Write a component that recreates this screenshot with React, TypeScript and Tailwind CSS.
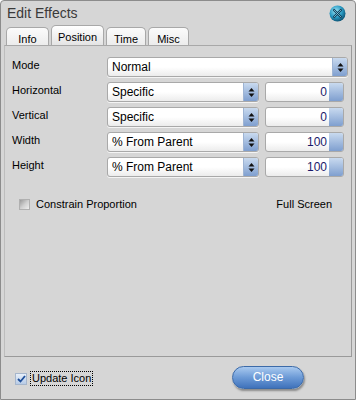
const font = { fontFamily: '"Liberation Sans", Arial, sans-serif' };

function Arrows() {
  return (
    <svg width="7" height="11" viewBox="0 0 7 11">
      <path d="M3.5 1 L6.5 4.5 L0.5 4.5 Z" fill="#111" />
      <path d="M3.5 10 L6.5 6.5 L0.5 6.5 Z" fill="#111" />
    </svg>
  );
}

function Select({ value, width }: { value: string; width: string }) {
  return (
    <div
      className={`${width} h-[20px] flex items-stretch rounded-[3px] border border-[#a9a9a9] bg-gradient-to-b from-white via-white to-[#ececec] shadow-[0_1px_0_#f4f4f4] overflow-hidden`}
    >
      <div className="flex-1 flex items-center pl-[4px] text-[12px] text-black">{value}</div>
      <div className="w-[15px] flex items-center justify-center bg-gradient-to-b from-[#c9daef] to-[#7f9fcf] border-l border-[#9eb4d4]">
        <Arrows />
      </div>
    </div>
  );
}

function NumberBox({ value }: { value: string }) {
  return (
    <div className="w-[79px] h-[20px] flex items-stretch rounded-[3px] border border-[#a9a9a9] bg-gradient-to-b from-white via-white to-[#ececec] overflow-hidden">
      <div className="flex-1 flex items-center justify-end pr-[2px] text-[12px] text-[#1a1a6a]">{value}</div>
      <div className="w-[14px] bg-gradient-to-b from-[#c9daef] to-[#7f9fcf]" />
    </div>
  );
}

function Row({ label, children }: { label: string; children: React.ReactNode }) {
  return (
    <div className="flex items-start">
      <div className="w-[95px] text-[11px] leading-[14px] pt-[1px] text-black">{label}</div>
      <div className="flex gap-[6px]">{children}</div>
    </div>
  );
}

function Tab({ label, active, width }: { label: string; active?: boolean; width: string }) {
  return (
    <div
      className={`${width} flex justify-center rounded-t-[5px] border border-b-0 border-[#a8a8a8] text-[11px] text-black ${
        active ? 'h-[20px] pt-[3px] bg-gradient-to-b from-white to-[#e4e4e4]' : 'h-[18px] pt-[3px] bg-gradient-to-b from-[#fbfbfb] to-[#ececec]'
      }`}
    >
      {label}
    </div>
  );
}

export default function App() {
  return (
    <div
      style={font}
      className="w-[356px] h-[400px] bg-[#d6d6d6] border border-[#8c8c8c] rounded-t-[4px] flex flex-col overflow-hidden"
    >
      <div className="h-[23px] flex items-center justify-between pl-[6px] pr-[9px] pt-[1px]">
        <span className="text-[14px] text-[#3a3a3a]">Edit Effects</span>
        <svg width="17" height="17" viewBox="0 0 17 17">
          <defs>
            <radialGradient id="cg" cx="40%" cy="35%" r="65%">
              <stop offset="0" stopColor="#9be3f5" />
              <stop offset="0.6" stopColor="#2a9bc4" />
              <stop offset="1" stopColor="#0d5678" />
            </radialGradient>
          </defs>
          <circle cx="8.5" cy="8.5" r="8" fill="url(#cg)" />
          <path d="M5 5 L12 12 M12 5 L5 12" stroke="#103a55" strokeWidth="2.2" strokeLinecap="round" />
          <path d="M5 5 L12 12 M12 5 L5 12" stroke="#7fd2ea" strokeWidth="0.8" strokeLinecap="round" />
        </svg>
      </div>

      <div className="flex items-end gap-[2px] pl-[5px] h-[21px]">
        <Tab label="Info" width="w-[43px]" />
        <Tab label="Position" width="w-[53px]" active />
        <Tab label="Time" width="w-[40px]" />
        <Tab label="Misc" width="w-[41px]" />
      </div>

      <div className="mx-[3px] h-[312px] border border-t-[#a8a8a8] border-l-[#bdbdbd] border-r-[#9a9a9a] border-b-[#9a9a9a] pl-[7px] pt-[11px] flex flex-col">
        <div className="flex flex-col gap-[5px]">
          <Row label="Mode">
            <Select value="Normal" width="w-[241px]" />
          </Row>
          <Row label="Horizontal">
            <Select value="Specific" width="w-[152px]" />
            <NumberBox value="0" />
          </Row>
          <Row label="Vertical">
            <Select value="Specific" width="w-[152px]" />
            <NumberBox value="0" />
          </Row>
          <Row label="Width">
            <Select value="% From Parent" width="w-[152px]" />
            <NumberBox value="100" />
          </Row>
          <Row label="Height">
            <Select value="% From Parent" width="w-[152px]" />
            <NumberBox value="100" />
          </Row>
        </div>

        <div className="mt-[19px] flex items-center justify-between pl-[7px] pr-[19px]">
          <div className="flex items-center gap-[6px]">
            <div className="w-[11px] h-[11px] border border-[#b0b0b0] bg-gradient-to-br from-[#9a9a9a] via-[#cfcfcf] to-[#eeeeee]" />
            <span className="text-[11px] text-black">Constrain Proportion</span>
          </div>
          <span className="text-[11px] text-black">Full Screen</span>
        </div>
      </div>

      <div className="flex-1 flex items-center justify-between pl-[14px] pr-[51px] pb-[2px]">
        <div className="flex items-center gap-[3px] mt-[3px]">
          <div className="w-[12px] h-[12px] border border-[#a6b6cc] bg-gradient-to-b from-[#e8f0fa] to-[#b7cbe6] flex items-center justify-center">
            <svg width="9" height="8" viewBox="0 0 9 8">
              <path d="M1 4 L3.5 6.5 L8 1" stroke="#1f4f9a" strokeWidth="1.8" fill="none" />
            </svg>
          </div>
          <span className="text-[11px] text-black border border-dotted border-black px-[1px] leading-[13px]">Update Icon</span>
        </div>
        <button className="w-[72px] h-[23px] rounded-full border border-[#3c6aa8] bg-gradient-to-b from-[#a9c9ef] via-[#6c9ad6] to-[#3f72bb] text-white text-[12px] shadow-[1px_2px_2px_rgba(0,0,0,0.35)]">
          Close
        </button>
      </div>
    </div>
  );
}
